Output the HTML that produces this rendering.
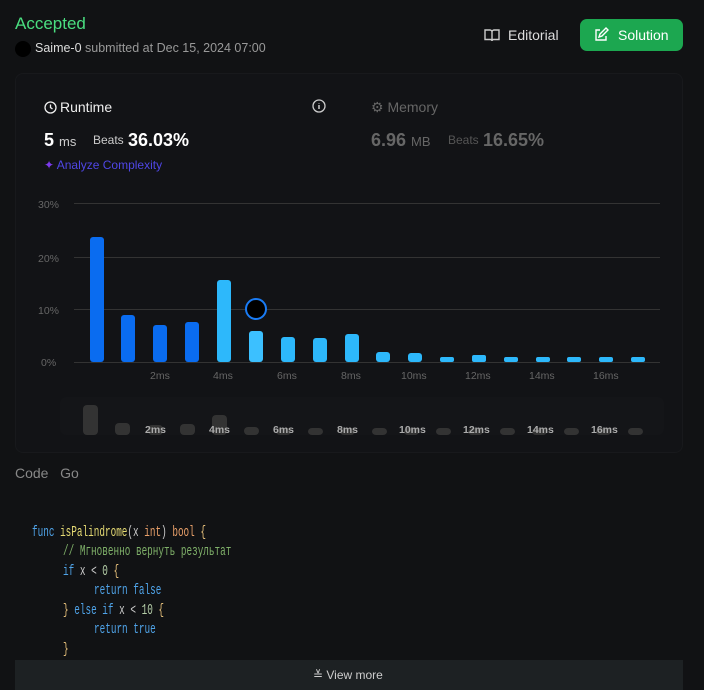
<!DOCTYPE html>
<html><head><meta charset="utf-8"><style>
*{margin:0;padding:0;box-sizing:border-box}
body{width:704px;height:679px;background:#111214;font-family:"Liberation Sans",sans-serif;color:#eee;position:relative;overflow:hidden}
.abs{position:absolute}
.card{left:15px;top:73px;width:668px;height:380px;border:1px solid #18191c;border-radius:8px;background:#121316}
.m{position:absolute;font-family:"Liberation Mono",monospace;font-size:14.5px;white-space:pre;transform:scaleX(0.645);transform-origin:0 0;color:#ccc}
</style></head><body>
<div class="abs" style="left:15px;top:14px;font-size:17px;color:#4ade80">Accepted</div>
<div class="abs" style="left:15px;top:41px;width:16px;height:16px;border-radius:50%;background:#000"></div>
<div class="abs" style="left:35px;top:41px;font-size:12.5px;color:#999"><span style="color:#ddd">Saime-0</span> submitted at Dec 15, 2024 07:00</div>
<svg class="abs" style="left:483px;top:27px" width="18" height="16" viewBox="0 0 18 16"><path d="M2 3h5a2 2 0 0 1 2 2v9a1.5 1.5 0 0 0-1.5-1.5H2zM16 3h-5a2 2 0 0 0-2 2v9a1.5 1.5 0 0 1 1.5-1.5H16z" fill="none" stroke="#ccc" stroke-width="1.4"/></svg>
<div class="abs" style="left:508px;top:27px;font-size:14px;color:#ddd">Editorial</div>
<div class="abs" style="left:580px;top:19px;width:103px;height:32px;border-radius:7px;background:#1ca750"></div>
<svg class="abs" style="left:593px;top:27px" width="16" height="16" viewBox="0 0 16 16"><path d="M7 3H3v10h10V9M6 10l1-3 6-6 2 2-6 6z" fill="none" stroke="#fff" stroke-width="1.4"/></svg>
<div class="abs" style="left:618px;top:27px;font-size:14px;color:#fff">Solution</div>
<div class="abs card"></div>
<svg class="abs" style="left:44px;top:101px" width="13" height="13" viewBox="0 0 13 13"><circle cx="6.5" cy="6.5" r="5.5" fill="none" stroke="#eee" stroke-width="1.3"/><path d="M6.5 3.5v3l2 1.5" fill="none" stroke="#eee" stroke-width="1.3"/></svg>
<div class="abs" style="left:60px;top:99px;font-size:14px;color:#eee">Runtime</div>
<svg class="abs" style="left:312px;top:99px" width="14" height="14" viewBox="0 0 14 14"><circle cx="7" cy="7" r="6" fill="none" stroke="#ccc" stroke-width="1.3"/><path d="M7 6v4M7 4v.5" stroke="#ccc" stroke-width="1.5"/></svg>
<div class="abs" style="left:371px;top:99px;font-size:14px;color:#666">⚙ Memory</div>
<div class="abs" style="left:44px;top:130px;font-size:18px;font-weight:bold;color:#fff">5 <span style="font-size:13px;font-weight:normal;color:#ccc">ms</span></div>
<div class="abs" style="left:93px;top:133px;font-size:12px;color:#ccc">Beats</div>
<div class="abs" style="left:128px;top:130px;font-size:18px;font-weight:bold;color:#fff">36.03%</div>
<div class="abs" style="left:371px;top:130px;font-size:18px;font-weight:bold;color:#666">6.96 <span style="font-size:13px;font-weight:normal">MB</span></div>
<div class="abs" style="left:448px;top:133px;font-size:12px;color:#555">Beats</div>
<div class="abs" style="left:483px;top:130px;font-size:18px;font-weight:bold;color:#666">16.65%</div>
<div class="abs" style="left:44px;top:158px;font-size:12px;color:#7c3aed">✦ <span style="color:#4f46e5">Analyze Complexity</span></div>
<svg class="abs" style="left:0;top:0" width="704" height="460">
<g stroke="#333" stroke-width="1"><line x1="74" y1="203.5" x2="660" y2="203.5"/><line x1="74" y1="257.5" x2="660" y2="257.5"/><line x1="74" y1="309.5" x2="660" y2="309.5"/><line x1="74" y1="362.5" x2="660" y2="362.5"/></g>
<g font-size="10.5" fill="#666" font-family="Liberation Sans"><text x="38" y="208">30%</text><text x="38" y="262">20%</text><text x="38" y="314">10%</text><text x="41" y="366">0%</text>
<text x="150" y="379">2ms</text><text x="213" y="379">4ms</text><text x="277" y="379">6ms</text><text x="341" y="379">8ms</text><text x="401" y="379">10ms</text><text x="465" y="379">12ms</text><text x="529" y="379">14ms</text><text x="593" y="379">16ms</text></g>
<g fill="#0a6cf0"><rect x="90" y="237" width="14" height="125" rx="3"/><rect x="121" y="315" width="14" height="47" rx="3"/><rect x="153" y="325" width="14" height="37" rx="3"/><rect x="185" y="322" width="14" height="40" rx="3"/></g>
<g fill="#2db8fb"><rect x="217" y="280" width="14" height="82" rx="3"/><rect x="249" y="331" width="14" height="31" rx="3" fill="#3cc0ff"/><rect x="281" y="337" width="14" height="25" rx="3"/><rect x="313" y="338" width="14" height="24" rx="3"/><rect x="345" y="334" width="14" height="28" rx="3"/><rect x="376" y="352" width="14" height="10" rx="3"/><rect x="408" y="353" width="14" height="9" rx="3"/><rect x="440" y="357" width="14" height="5" rx="2"/><rect x="472" y="355" width="14" height="7" rx="2"/><rect x="504" y="357" width="14" height="5" rx="2"/><rect x="536" y="357" width="14" height="5" rx="2"/><rect x="567" y="357" width="14" height="5" rx="2"/><rect x="599" y="357" width="14" height="5" rx="2"/><rect x="631" y="357" width="14" height="5" rx="2"/></g>
<circle cx="256" cy="309" r="10" fill="#000" stroke="#1a7cf5" stroke-width="2"/>
<rect x="60" y="397" width="604" height="38" rx="6" fill="#141518"/>
<g fill="#333"><rect x="83" y="405" width="15" height="30" rx="4"/><rect x="115" y="423" width="15" height="12" rx="4"/><rect x="148" y="425" width="15" height="10" rx="4"/><rect x="180" y="424" width="15" height="11" rx="4"/><rect x="212" y="415" width="15" height="20" rx="4"/><rect x="244" y="427" width="15" height="8" rx="4"/><rect x="276" y="428" width="15" height="7" rx="4"/><rect x="308" y="428" width="15" height="7" rx="4"/><rect x="340" y="428" width="15" height="7" rx="4"/><rect x="372" y="428" width="15" height="7" rx="4"/><rect x="404" y="428" width="15" height="7" rx="4"/><rect x="436" y="428" width="15" height="7" rx="4"/><rect x="468" y="428" width="15" height="7" rx="4"/><rect x="500" y="428" width="15" height="7" rx="4"/><rect x="532" y="428" width="15" height="7" rx="4"/><rect x="564" y="428" width="15" height="7" rx="4"/><rect x="596" y="428" width="15" height="7" rx="4"/><rect x="628" y="428" width="15" height="7" rx="4"/></g>
<g font-size="10.5" fill="#aaa" font-weight="bold" font-family="Liberation Sans"><text x="145" y="433">2ms</text><text x="209" y="433">4ms</text><text x="273" y="433">6ms</text><text x="337" y="433">8ms</text><text x="399" y="433">10ms</text><text x="463" y="433">12ms</text><text x="527" y="433">14ms</text><text x="591" y="433">16ms</text></g>
</svg>
<div class="abs" style="left:15px;top:465px;font-size:14px;color:#888">Code&nbsp;&nbsp;&nbsp;Go</div>
<div class="m" style="left:32px;top:525px"><span style="color:#4fa3e8">func</span> <span style="color:#e6db74">isPalindrome</span>(x <span style="color:#e9a06a">int</span>) <span style="color:#e9a06a">bool</span> <span style="color:#e6c07b">{</span></div>
<div class="m" style="left:63px;top:544px;color:#7fb069">// Мгновенно вернуть результат</div>
<div class="m" style="left:63px;top:564px"><span style="color:#4fa3e8">if</span> x &lt; <span style="color:#b5cea8">0</span> <span style="color:#e6c07b">{</span></div>
<div class="m" style="left:94px;top:583px;color:#4fa3e8">return false</div>
<div class="m" style="left:63px;top:603px"><span style="color:#e6c07b">}</span> <span style="color:#4fa3e8">else if</span> x &lt; <span style="color:#b5cea8">10</span> <span style="color:#e6c07b">{</span></div>
<div class="m" style="left:94px;top:622px;color:#4fa3e8">return true</div>
<div class="m" style="left:63px;top:642px;color:#e6c07b">}</div>
<div class="abs" style="left:15px;top:660px;width:668px;height:30px;background:#1d2123"></div>
<div class="abs" style="left:313px;top:668px;font-size:12px;color:#ccc">≚ View more</div>
</body></html>
